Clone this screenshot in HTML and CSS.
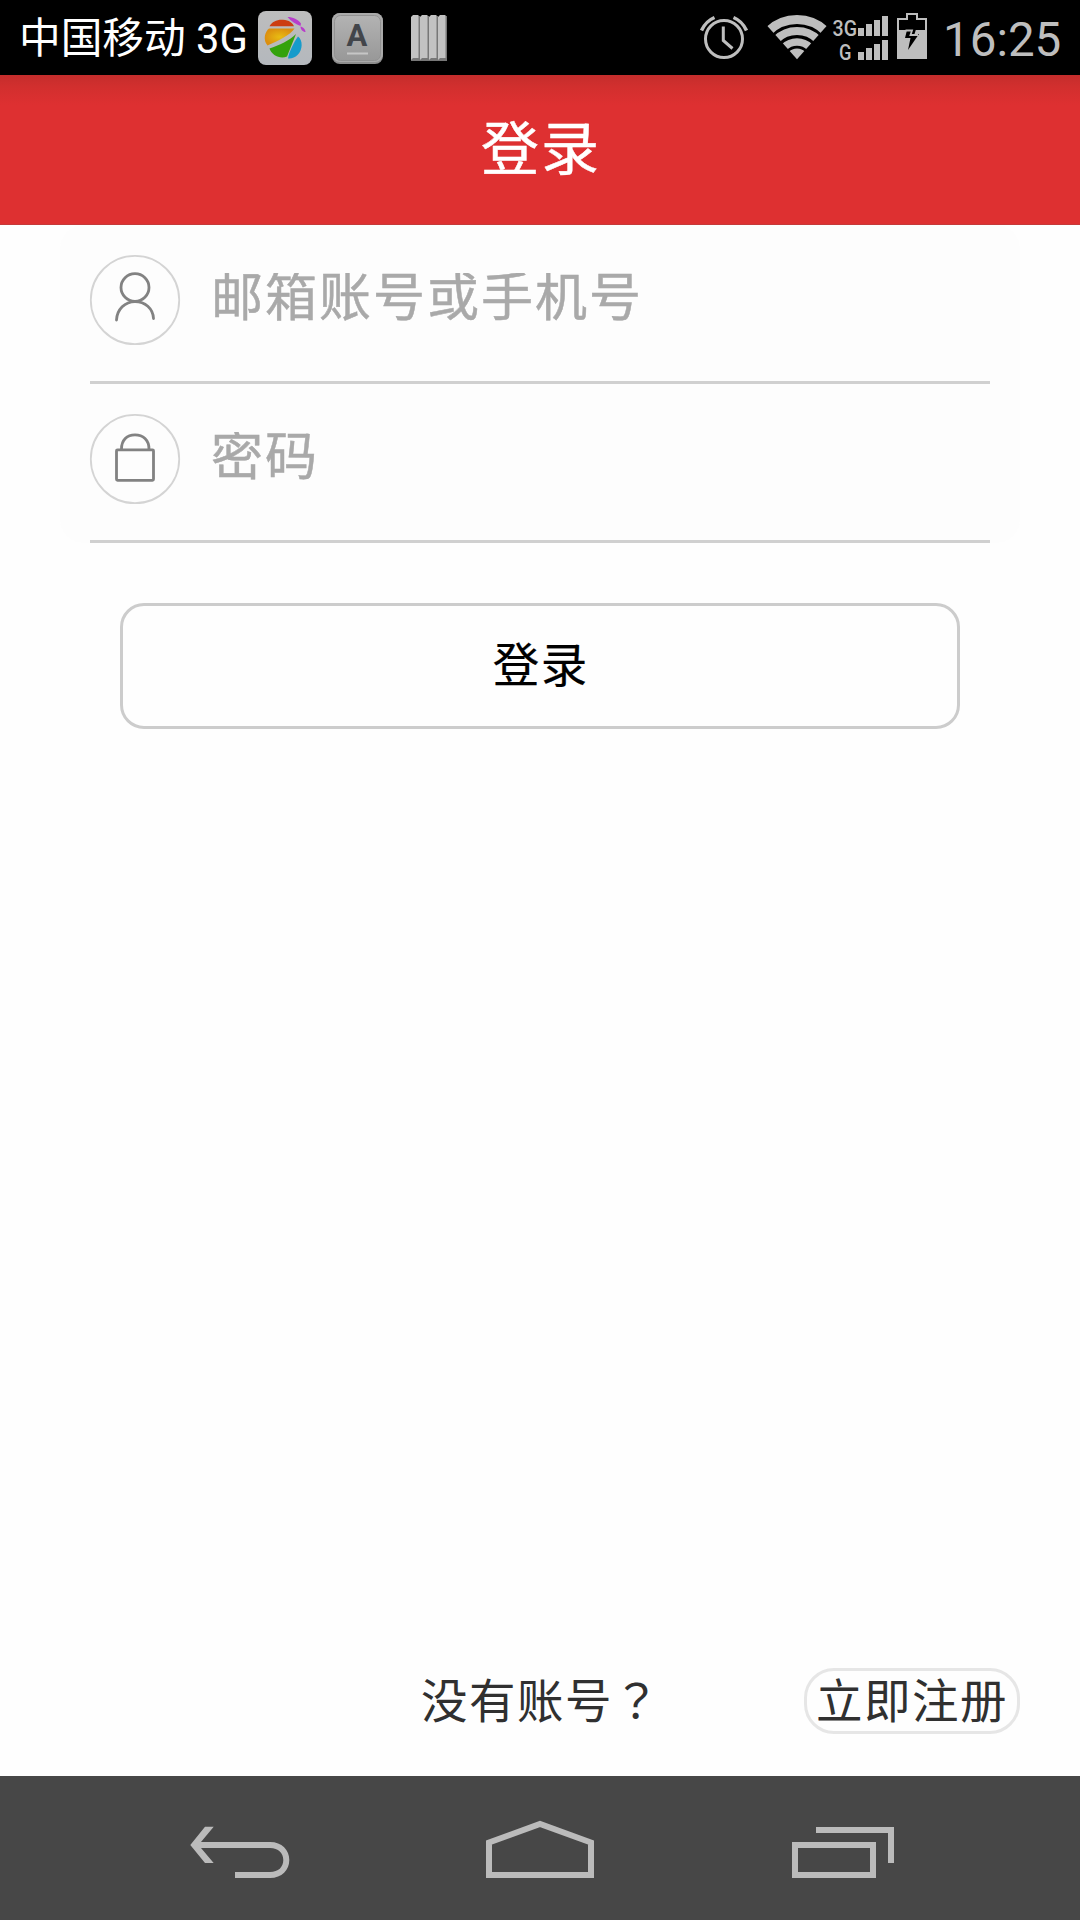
FILE: index.html
```html
<!DOCTYPE html>
<html lang="zh-CN">
<head>
<meta charset="utf-8">
<title>登录</title>
<link rel="stylesheet" href="styles.css">
</head>
<body>
<div class="screen">
  <div class="status">
    <div class="carrier">中国移动<span class="latin"> 3G</span></div>
    <svg class="ico-app" width="54" height="54" viewBox="258 11 54 54">
      <defs>
        <linearGradient id="tile" x1="0" y1="0" x2="0" y2="1"><stop offset="0" stop-color="#bdbdbd"/><stop offset="1" stop-color="#b4b8bd"/></linearGradient>
        <radialGradient id="gold"><stop offset="0" stop-color="#e8bd12"/><stop offset="1" stop-color="#dc8f10"/></radialGradient>
      </defs>
      <rect x="258" y="11" width="54" height="54" rx="8" fill="url(#tile)"/>
      <path d="M269.5 26.3C272 21.5 277 19.3 283 19.7C289 20 293 23 294 26.3Z" fill="#cc3d12"/>
      <path d="M287.5 17C293 17 298 19.5 301 23.5L300.5 26C296 24.500 291 21 287.500 17Z" fill="#b83dcb"/>
      <path d="M300.5 26.500C303 27 305.500 29.500 305.500 32C302.800 32 300.500 29.500 300.500 26.500Z" fill="#b83dcb"/>
      <path d="M269 28.500H294.500C291 34.500 277 41.500 267.500 45.500C262.500 40 265 31.500 269 28.500Z" fill="url(#gold)"/>
      <path d="M296 34L287 56.500C280 59.500 271.500 55 269.500 48.500C279 45.500 290 40 296 34Z" fill="#34a20c"/>
      <path d="M298 36.500C303 40 303 50 297.500 55C295 57.500 291.500 59 288 58.500C289 52 294 42 298 36.500Z" fill="#169bcb"/>
    </svg>
    <svg class="ico-ime" width="51" height="51" viewBox="0 0 51 51">
      <defs><linearGradient id="key" x1="0" y1="0" x2="0" y2="1"><stop offset="0" stop-color="#b3b3b3"/><stop offset="1" stop-color="#989898"/></linearGradient></defs>
      <rect width="51" height="51" rx="8" fill="#8d8d8d"/>
      <rect x="0" y="0" width="51" height="49" rx="8" fill="#aaa"/>
      <rect x="2.500" y="2.500" width="46" height="45" rx="6" fill="url(#key)" stroke="#929292" stroke-width="1"/>
      <text x="25" y="33" class="key-letter">A</text>
      <path d="M15 40.500H36" stroke="#c6c6c6" stroke-width="2"/>
    </svg>
    <svg class="ico-bars" width="36" height="46" viewBox="0 0 36 46">
      <g fill="#777"><path d="M0 46V44L2 42H9V46ZM9 46V44L11 42H18V46ZM18 46V44L20 42H27V46ZM27 46V44L29 42H36V46Z"/><path d="M7 1H9V46H7ZM16 1H18V46H16ZM25 1H27V46H25ZM34 1H36V46H34Z"/></g>
      <g fill="#c2c2c2"><path d="M0 2L2 0H7.500V43H2L0 45ZM9 2L11 0H16.500V43H11L9 45ZM18 2L20 0H25.500V43H20L18 45ZM27 2L29 0H34.500V43H29L27 45Z"/></g>
    </svg>
    <svg class="ico-alarm" width="48" height="44" viewBox="700 16 48 44" fill="none" stroke="#bebebe">
      <circle cx="724" cy="39" r="18.500" stroke-width="3"/>
      <path d="M723.300 26.500V40.500L732.500 48.500" stroke-width="3"/>
      <path d="M701.500 30.500C704 25 708.500 20 714.500 17.500M746.500 30.500C744 25 739.500 20 733.500 17.500" stroke-width="3.500"/>
    </svg>
    <svg class="ico-wifi" width="60" height="45" viewBox="767 15 60 45">
      <defs><clipPath id="cone"><path d="M797 59.300L766.500 25V10H827.500V25Z"/></clipPath></defs>
      <g clip-path="url(#cone)" fill="none" stroke="#bebebe">
        <circle cx="797" cy="60.500" r="41" stroke-width="9"/>
        <circle cx="797" cy="60.500" r="29.500" stroke-width="8"/>
        <circle cx="797" cy="60.500" r="18.500" stroke-width="7.500"/>
        <circle cx="797" cy="60.500" r="6" stroke-width="12"/>
      </g>
    </svg>
    <svg class="ico-signal" width="56" height="46" viewBox="832 15 56 46" fill="#bebebe">
      <text x="832.500" y="35.800" textLength="24.500" lengthAdjust="spacingAndGlyphs" class="net">3G</text>
      <text x="839" y="59.800" textLength="12.500" lengthAdjust="spacingAndGlyphs" class="net">G</text>
      <path d="M858 28h6v8h-6zM866 24h6v12h-6zM874 20h6v16h-6zM882 16h6v20h-6z"/>
      <path d="M858 52h6v8h-6zM866 48h6v12h-6zM874 44h6v16h-6zM882 40h6v20h-6z"/>
    </svg>
    <svg class="ico-battery" width="30" height="46" viewBox="897 13 30 46">
      <path d="M898 58V19H907V14H917V19H926V58Z" fill="none" stroke="#bebebe" stroke-width="2"/>
      <path d="M898 30H926V58H898Z" fill="#bebebe"/>
      <path d="M908 26H917L914.500 34H919L908 50L910.500 38H905Z" fill="#000"/>
      <path d="M905.500 30.500H912L910.500 35H918" fill="none" stroke="#bebebe" stroke-width="1.800"/>
    </svg>
    <div class="clock">16:25</div>
  </div>

  <header class="header">登录</header>

  <main class="content">
    <div class="fields">
      <div class="field">
        <svg width="90" height="90" viewBox="0 0 90 90" fill="none">
          <circle cx="45" cy="45" r="44.200" stroke="#d4d4d4" stroke-width="1.800"/>
          <g stroke="#828282" stroke-width="2.800" stroke-linecap="round">
            <ellipse cx="45" cy="32.500" rx="14" ry="13.800"/>
            <path d="M26.500 65C27 54.500 35 46.600 45 46.600S63 53.500 63.500 63.500"/>
          </g>
        </svg>
        <span class="hint">邮箱账号或手机号</span>
      </div>
      <div class="field">
        <svg width="90" height="90" viewBox="0 0 90 90" fill="none">
          <circle cx="45" cy="45" r="44.200" stroke="#d4d4d4" stroke-width="1.800"/>
          <g stroke="#828282" stroke-width="2.800">
            <rect x="26.500" y="35.800" width="37" height="30.500" rx="1"/>
            <path d="M31.500 35C31.500 26 37 20.800 45 20.800S59 26 59 35"/>
          </g>
        </svg>
        <span class="hint">密码</span>
      </div>
    </div>
    <div class="login">登录</div>
    <div class="footer">
      <span class="ask">没有账号<span class="mark" lang="zh-TW">？</span></span>
      <span class="register">立即注册</span>
    </div>
  </main>

  <nav class="nav">
    <svg width="100" height="60" viewBox="190 1820 100 60">
      <path d="M205 1826.700H213.700L201 1842H270C282 1842 289.300 1850 289.300 1860S282 1878 270 1878H235V1872H270C278.500 1872 283.300 1867 283.300 1860S278.500 1848 270 1848H201L213.700 1863H205L190.300 1845Z" fill="#bbb"/>
    </svg>
    <svg class="home" width="108" height="60" viewBox="486 1820 108 60" fill="none" stroke="#bbb" stroke-width="6">
      <path d="M489 1842.500L540 1824L591 1842.500V1875H489Z"/>
    </svg>
    <svg width="102" height="60" viewBox="792 1820 102 60" fill="none" stroke="#bbb" stroke-width="6">
      <path d="M795 1845H873V1875H795ZM816 1830H891V1863"/>
    </svg>
  </nav>
</div>
</body>
</html>
```
FILE: styles.css
```css
* { box-sizing: border-box; }
body { margin: 0; font-family: "Noto Sans CJK SC", sans-serif; }
svg { display: block; flex: none; overflow: visible; }
.screen { width: 1080px; height: 1920px; display: flex; flex-direction: column; background: #fefefe; overflow: hidden; }

.status { height: 75px; flex: none; background: #000; display: flex; align-items: flex-start; padding-left: 19px; }
.carrier { width: 239px; color: #fff; font-size: 41.7px; line-height: 71px; white-space: pre; }
.latin { font-family: Roboto, sans-serif; }
.ico-app { margin-top: 11px; }
.ico-ime { margin: 13px 0 0 20px; }
.key-letter { font: bold 31px Roboto, sans-serif; fill: #42454a; text-anchor: middle; }
.ico-bars { margin: 15px 0 0 28px; }
.ico-alarm { margin: 16px 0 0 253px; }
.ico-wifi { margin: 15px 0 0 19px; }
.ico-signal { margin: 15px 0 0 5px; }
.net { font: 500 22.5px Roboto, sans-serif; }
.ico-battery { margin: 13px 0 0 9px; }
.clock { margin-left: 16px; color: #bebebe; font: 47.5px/81px Roboto, sans-serif; }

.header { height: 150px; flex: none; padding-top: 3px; text-align: center; color: #fff; font-size: 58px; letter-spacing: 2px; text-indent: 2px; line-height: 135px; -webkit-text-stroke: .5px; background: linear-gradient(#c52d2c 0, #d22f2e 12px, #de3031 30px); border-bottom: 1px solid #c53a3a; }

.content { flex: 1; display: flex; flex-direction: column; }
.fields { margin: 0 60px; padding: 0 30px; background: #fdfdfd; border-radius: 24px; }
.field { height: 159px; border-bottom: 3px solid #d0d0d0; display: flex; gap: 31px; padding-top: 30px; }
.hint { margin-top: 18px; height: 48px; overflow: hidden; color: #a9a9a9; font-size: 52px; letter-spacing: 2px; line-height: 42px; white-space: nowrap; -webkit-text-stroke: .5px; }
.login { margin: 60px 120px 0; height: 126px; border: 3px solid #ccc; border-radius: 24px; text-align: center; color: #000; font-size: 46.5px; letter-spacing: 1.5px; text-indent: 1.5px; line-height: 112px; -webkit-text-stroke: .2px; }
.footer { margin: auto 60px 42px 421px; height: 66px; display: flex; justify-content: space-between; color: #303030; font-size: 46.5px; letter-spacing: 1.5px; line-height: 59px; }
.mark { font-family: "Noto Sans CJK TC", sans-serif; }
.register { width: 216px; border: 3px solid #e6e6e6; border-radius: 30px; text-align: center; line-height: 53px; }

.nav { height: 144px; flex: none; background: #474747; display: flex; justify-content: space-between; padding: 44px 186px 0 190px; }
.home { margin-right: 2px; }
```
